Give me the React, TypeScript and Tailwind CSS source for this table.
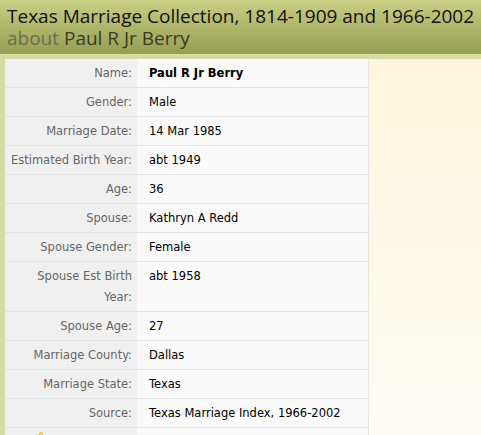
const rows: { label: string; value: string; bold?: boolean }[] = [
  { label: "Name:", value: "Paul R Jr Berry", bold: true },
  { label: "Gender:", value: "Male" },
  { label: "Marriage Date:", value: "14 Mar 1985" },
  { label: "Estimated Birth Year:", value: "abt 1949" },
  { label: "Age:", value: "36" },
  { label: "Spouse:", value: "Kathryn A Redd" },
  { label: "Spouse Gender:", value: "Female" },
  { label: "Spouse Est Birth Year:", value: "abt 1958" },
  { label: "Spouse Age:", value: "27" },
  { label: "Marriage County:", value: "Dallas" },
  { label: "Marriage State:", value: "Texas" },
  { label: "Source:", value: "Texas Marriage Index, 1966-2002" },
];

export default function App() {
  return (
    <div className="w-[481px] h-[435px] overflow-hidden bg-[#d5dca4] font-['DejaVu_Sans',Verdana,sans-serif]">
      {/* header */}
      <div className="h-[54px] bg-gradient-to-b from-[#c9cf85] to-[#959e53] pl-[7px] pt-[5px] font-['Open_Sans',sans-serif] text-[19px] leading-[22px]">
        <div className="text-[#111]">Texas Marriage Collection, 1814-1909 and 1966-2002</div>
        <div className="text-[#3c3c22]">
          <span className="text-[#6e6e4e]">about</span> Paul R Jr Berry
        </div>
      </div>

      <div className="flex mt-[5px] ml-[5px]">
        <table className="w-[364px] border-collapse text-[11.5px] leading-[21px] border-r border-[#e6e6e0]">
          <tbody>
            {rows.map((r) => (
              <tr key={r.label} className="border-b border-[#e4e4e4] align-top">
                <td className="w-[132px] bg-[#f0f0f0] text-right text-[#666] pr-[5px] pl-[4px] pt-[4px] pb-[3px]">
                  {r.label}
                </td>
                <td className={`bg-[#fafafa] text-black pl-[12px] pt-[4px] pb-[3px] ${r.bold ? "font-bold" : ""}`}>
                  {r.value}
                </td>
              </tr>
            ))}
            <tr>
              <td className="w-[132px] bg-[#f0f0f0] h-[29px] align-top pl-[30px] pt-[2px]">
                <svg width="12" height="10" viewBox="0 0 12 10">
                  <path d="M2 8 L6 2 L10 8" fill="#f3e38a" stroke="#e0b640" strokeWidth="1" />
                </svg>
              </td>
              <td className="bg-[#fafafa]" />
            </tr>
          </tbody>
        </table>
        <div className="flex-1 bg-gradient-to-b from-[#fdf6dc] to-[#fffdf8]" />
      </div>
    </div>
  );
}
